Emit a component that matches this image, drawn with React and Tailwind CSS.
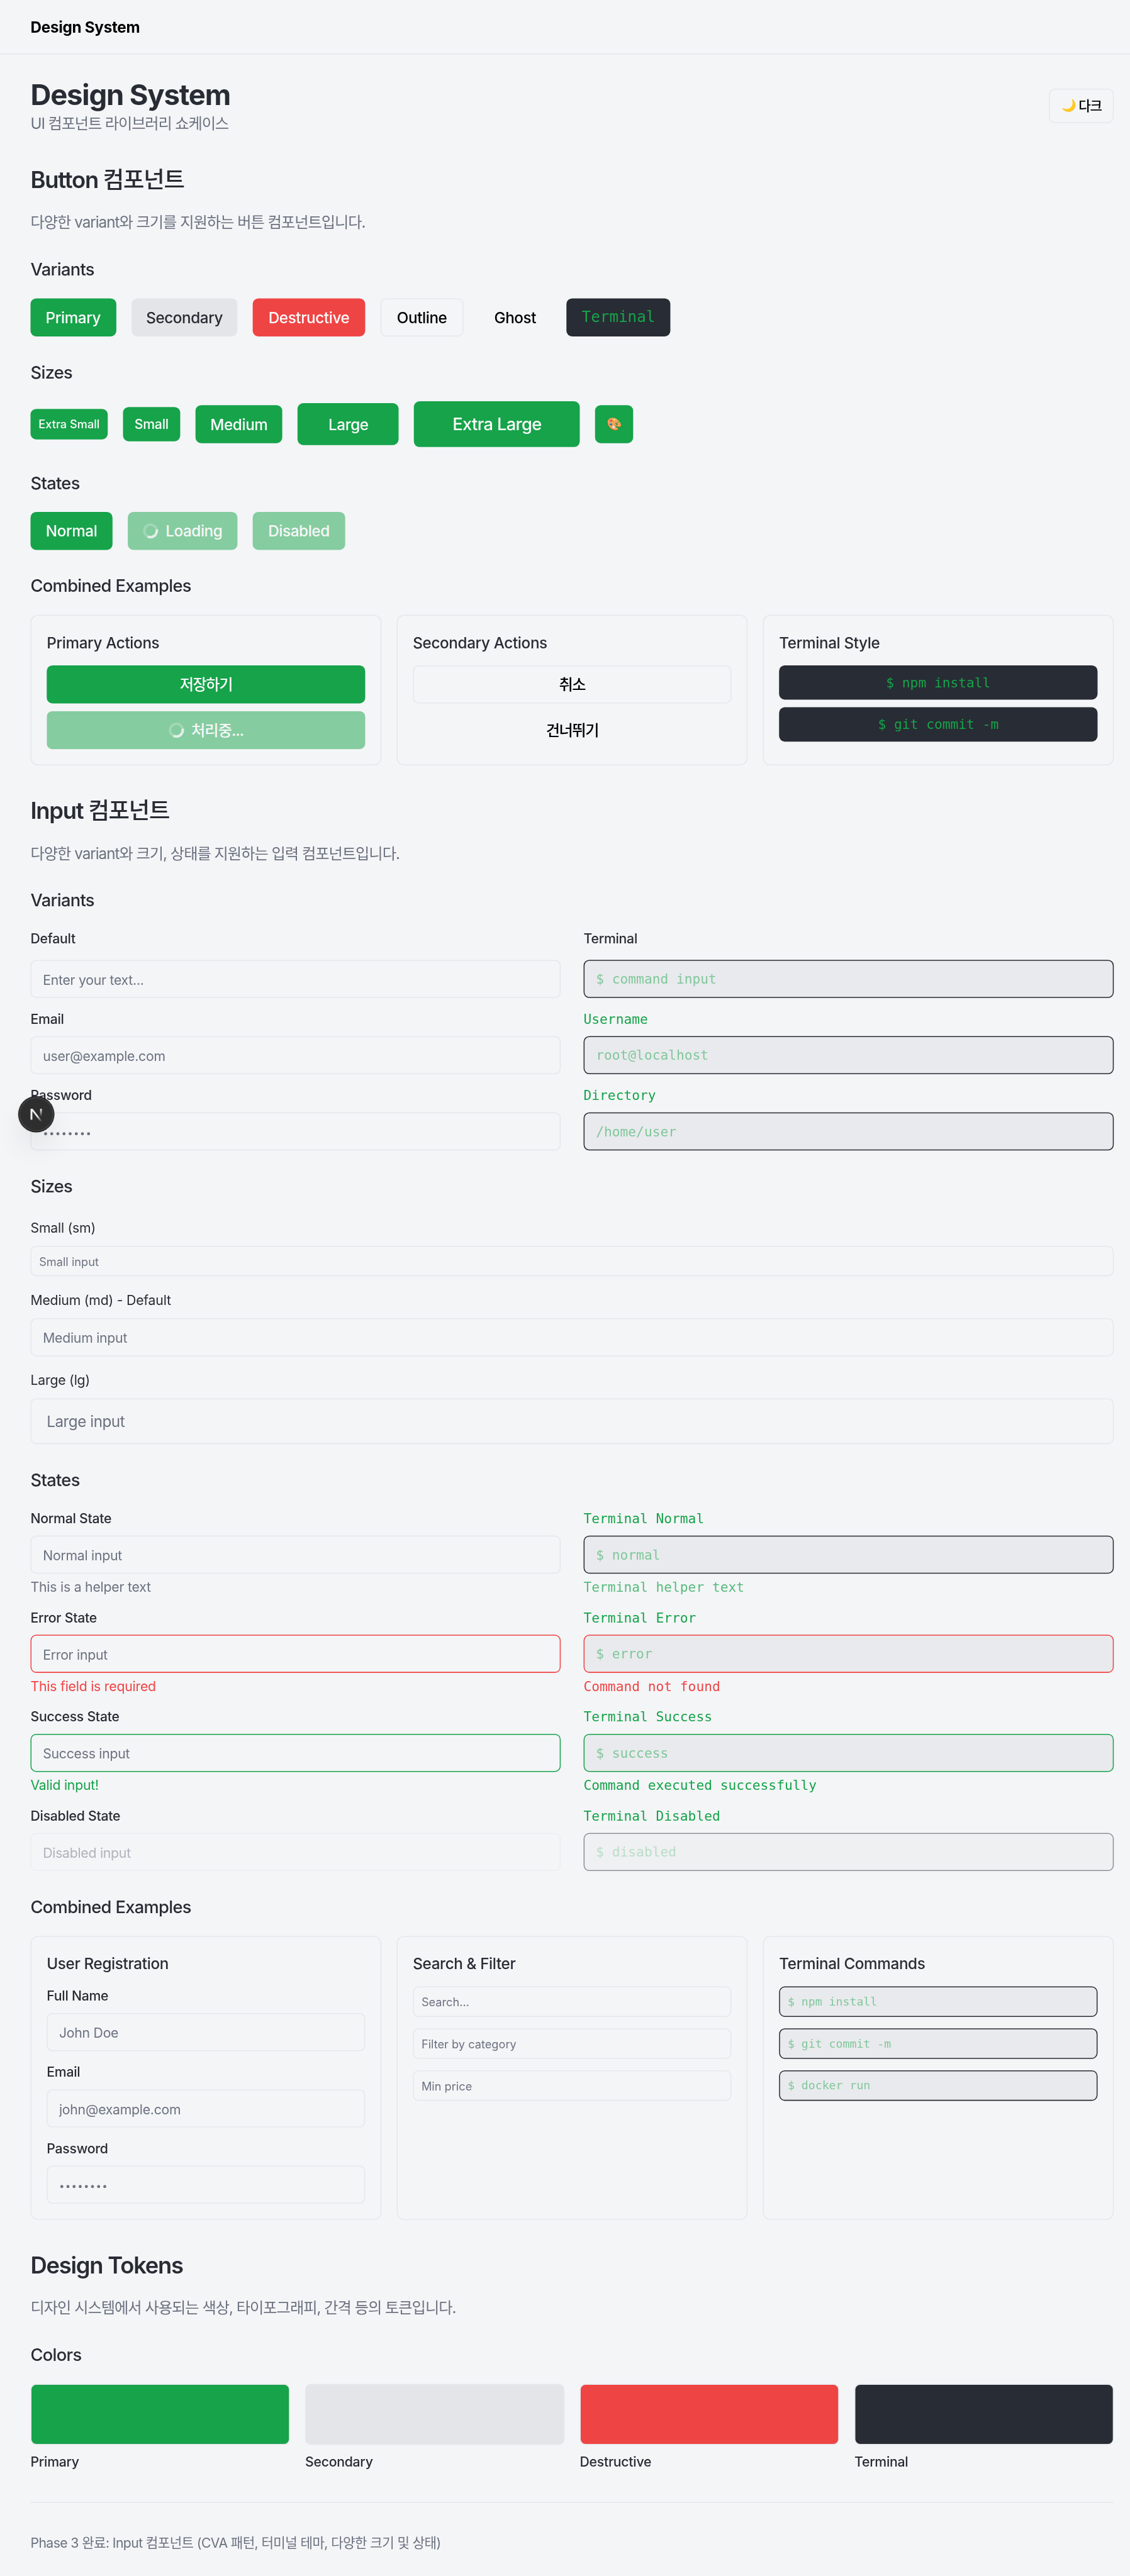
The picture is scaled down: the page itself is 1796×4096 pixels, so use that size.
import clsx from "clsx";

const MONO = "font-['DejaVu_Sans_Mono','Liberation_Mono','Noto_Sans_CJK_KR',monospace]";

const buttonVariants = {
  primary: "bg-[#16a34a] text-[#fafafa]",
  secondary: "bg-[#e4e5e8] text-[#282c34]",
  destructive: "bg-[#ef4444] text-[#fafafa]",
  outline: "border border-[#e5e7eb] text-black",
  ghost: "text-black",
  terminal: "bg-[#282c34] text-[#16a34a]",
};

const buttonSizes = {
  xs: "h-8 px-2 text-xs",
  sm: "h-9 px-3 text-sm tracking-[-0.01em]",
  md: "h-10 px-4 text-base tracking-[-0.017em]",
  lg: "h-11 px-8 text-base tracking-[-0.017em]",
  xl: "h-12 px-10 text-lg tracking-[-0.024em]",
  icon: "size-10 text-[13px]",
};

function Spinner() {
  return (
    <svg className="mr-2 size-4 -rotate-[152deg]" viewBox="0 0 24 24" fill="none">
      <circle className="opacity-25" cx="12" cy="12" r="10" stroke="currentColor" strokeWidth="4" />
      <path
        className="opacity-75"
        fill="currentColor"
        d="M4 12a8 8 0 018-8V0C5.373 0 0 5.373 0 12h4zm2 5.291A7.962 7.962 0 014 12H0c0 3.042 1.135 5.824 3 7.938l3-2.647z"
      />
    </svg>
  );
}

function Button({ variant = "primary", size = "md", loading, disabled, className, children }) {
  return (
    <button
      type="button"
      disabled={loading || disabled}
      className={clsx(
        "inline-flex shrink-0 items-center justify-center rounded-md font-medium whitespace-nowrap disabled:opacity-50",
        buttonVariants[variant],
        buttonSizes[size],
        variant === "terminal" && MONO,
        variant === "terminal" && "font-normal tracking-normal!",
        className,
      )}
    >
      {loading && <Spinner />}
      {children}
    </button>
  );
}

const inputSizes = {
  sm: "h-8 px-2 text-xs",
  md: "h-10 px-3 text-sm tracking-[-0.012em]",
  lg: "h-12 px-4 text-base tracking-[-0.02em]",
};

function Input({ terminal, size = "md", state, disabled, placeholder, type = "text", className }) {
  return (
    <input
      type={type}
      disabled={disabled}
      placeholder={placeholder}
      className={clsx(
        "block w-full rounded-md border disabled:opacity-50",
        inputSizes[size],
        terminal
          ? "bg-[#282c34]/5 tracking-normal! placeholder:text-[#16a34a]/50"
          : "bg-transparent placeholder:text-[#6b7280]",
        terminal && MONO,
        state === "error" && "border-[#ef4444]",
        state === "success" && "border-[#16a34a]",
        !state && (terminal ? "border-[#282c34]" : "border-[#e5e7eb]"),
        className,
      )}
    />
  );
}

const PASSWORD = "••••••••";
const passwordClass = "pb-[1px] placeholder:text-[10px] placeholder:tracking-[0.82px]";

function Field({ label, helper, terminal, state, ...props }) {
  return (
    <div className="flex flex-col">
      <label
        className={clsx(
          "mb-2 text-sm",
          terminal ? "font-normal text-[#16a34a]" : "font-medium tracking-[-0.012em]",
          terminal && MONO,
        )}
      >
        {label}
      </label>
      <Input terminal={terminal} state={state} {...props} />
      {helper && (
        <p
          className={clsx(
            "mt-1 text-sm",
            terminal ? MONO : "tracking-[-0.01em]",
            state === "error" && "text-[#ef4444]",
            state === "success" && "text-[#16a34a]",
            !state && (terminal ? "text-[#16a34a]/70" : "text-[#6b7280]"),
          )}
        >
          {helper}
        </p>
      )}
    </div>
  );
}

function Section({ title, description, children }) {
  return (
    <section className="flex flex-col gap-6">
      <div className="flex flex-col gap-4">
        <h2 className="text-2xl font-semibold tracking-[-0.034em]">{title}</h2>
        <p className="text-base tracking-[-0.042em] text-[#6b7280]">{description}</p>
      </div>
      {children}
    </section>
  );
}

function Group({ title, className, children }) {
  return (
    <div className="flex flex-col gap-4">
      <h3 className="text-lg leading-7 font-medium tracking-[-0.025em]">{title}</h3>
      <div className={className}>{children}</div>
    </div>
  );
}

function Card({ title, className, children }) {
  return (
    <div className="rounded-lg border border-[#e5e7eb] p-4">
      <h4 className="mb-3 text-base font-medium tracking-[-0.015em]">{title}</h4>
      <div className={clsx("flex flex-col", className)}>{children}</div>
    </div>
  );
}

const fields = [
  { label: "Normal", input: "Normal input", helper: "This is a helper text", tInput: "$ normal", tHelper: "Terminal helper text" },
  { label: "Error", state: "error", input: "Error input", helper: "This field is required", tInput: "$ error", tHelper: "Command not found" },
  { label: "Success", state: "success", input: "Success input", helper: "Valid input!", tInput: "$ success", tHelper: "Command executed successfully" },
  { label: "Disabled", disabled: true, input: "Disabled input", tInput: "$ disabled" },
];

const sizes = [
  { label: "Small (sm)", size: "sm", placeholder: "Small input" },
  { label: "Medium (md) - Default", size: "md", placeholder: "Medium input" },
  { label: "Large (lg)", size: "lg", placeholder: "Large input" },
];

const tokens = [
  ["Primary", "bg-[#16a34a]"],
  ["Secondary", "bg-[#e4e5e8]"],
  ["Destructive", "bg-[#ef4444]"],
  ["Terminal", "bg-[#282c34]"],
];

function DevBadge() {
  return (
    <div className="absolute top-[1151px] left-5 flex size-9 items-center justify-center rounded-full bg-[#2e2e2e] shadow-[0_0_0_1px_#111,inset_0_0_0_1px_#4a4a4a,0_16px_32px_-8px_rgba(0,0,0,0.24)]">
      <svg className="size-9" viewBox="0 0 216 216" fill="none">
        <defs>
          <linearGradient id="stem" x1="0" y1="74" x2="0" y2="122" gradientUnits="userSpaceOnUse">
            <stop stopColor="#fff" />
            <stop offset="1" stopColor="#fff" stopOpacity="0" />
          </linearGradient>
          <linearGradient id="slash" x1="115" y1="120" x2="142" y2="154" gradientUnits="userSpaceOnUse">
            <stop stopColor="#fff" />
            <stop offset="1" stopColor="#fff" stopOpacity="0" />
          </linearGradient>
        </defs>
        <rect x="132" y="74" width="11" height="48" fill="url(#stem)" />
        <path d="M72 142V74h13l60 78-8 6-54-70v54z" fill="url(#slash)" />
      </svg>
    </div>
  );
}

export default function App() {
  return (
    <div className="h-[4096px] w-[1796px] overflow-hidden bg-[#f4f5f7]">
      <div className="relative h-[2702.5px] w-[1185px] origin-top-left scale-[1.5156] font-['Inter','Noto_Sans_CJK_KR',sans-serif] text-[#282c34]">
        <header className="flex h-[57px] items-center border-b border-[#e5e7eb] px-8">
          <span className="text-base leading-6 font-bold tracking-[-0.012em] text-black">Design System</span>
        </header>

        <main className="flex flex-col gap-8 pt-6 pr-[17px] pl-8">
          <div className="flex items-center justify-between">
            <div>
              <h1 className="text-3xl leading-9 font-bold tracking-[-0.026em]">Design System</h1>
              <p className="text-base tracking-[-0.047em] text-[#6b7280]">UI 컴포넌트 라이브러리 쇼케이스</p>
            </div>
            <Button variant="outline" size="sm" className="w-[68px] tracking-[-0.06em]!">
              <span className="mr-[3px] text-[12.5px]">🌙</span>다크
            </Button>
          </div>

          <Section
            title={<>Button <span className="font-medium">컴포넌트</span></>}
            description="다양한 variant와 크기를 지원하는 버튼 컴포넌트입니다."
          >
            <Group title="Variants" className="flex items-center gap-4">
              <Button className="w-[89.5px]">Primary</Button>
              <Button variant="secondary" className="w-[111.8px]">Secondary</Button>
              <Button variant="destructive" className="w-[117.4px]">Destructive</Button>
              <Button variant="outline" className="w-[87.6px]">Outline</Button>
              <Button variant="ghost" className="w-[75.9px]">Ghost</Button>
              <Button variant="terminal" className="w-[108.8px]">Terminal</Button>
            </Group>
            <Group title="Sizes" className="flex items-center gap-4">
              <Button size="xs" className="w-[81px]">Extra Small</Button>
              <Button size="sm" className="w-[59.8px]">Small</Button>
              <Button className="w-[91.7px]">Medium</Button>
              <Button size="lg" className="w-[105.9px]">Large</Button>
              <Button size="xl" className="w-[173.6px]">Extra Large</Button>
              <Button size="icon">🎨</Button>
            </Group>
            <Group title="States" className="flex items-center gap-4">
              <Button className="w-[85.9px]">Normal</Button>
              <Button loading className="w-[115.3px]">Loading</Button>
              <Button disabled className="w-[96.5px]">Disabled</Button>
            </Group>
            <Group title="Combined Examples" className="grid grid-cols-3 gap-4">
              <Card title="Primary Actions" className="gap-2">
                <Button className="w-full tracking-[-0.06em]!">저장하기</Button>
                <Button loading className="w-full tracking-[-0.04em]!">처리중...</Button>
              </Card>
              <Card title="Secondary Actions" className="gap-2">
                <Button variant="outline" className="w-full tracking-[-0.06em]!">취소</Button>
                <Button variant="ghost" className="w-full tracking-[-0.06em]!">건너뛰기</Button>
              </Card>
              <Card title="Terminal Style" className="gap-2">
                <Button variant="terminal" size="sm" className="w-full">$ npm install</Button>
                <Button variant="terminal" size="sm" className="w-full">$ git commit -m</Button>
              </Card>
            </Group>
          </Section>

          <Section
            title={<>Input <span className="font-medium">컴포넌트</span></>}
            description="다양한 variant와 크기, 상태를 지원하는 입력 컴포넌트입니다."
          >
            <Group title="Variants" className="grid grid-cols-2 gap-6">
              <div className="flex flex-col gap-3">
                <h4 className="text-sm font-medium tracking-[-0.012em]">Default</h4>
                <Input placeholder="Enter your text..." />
                <Field label="Email" type="email" placeholder="user@example.com" />
                <Field label="Password" type="password" placeholder={PASSWORD} className={passwordClass} />
              </div>
              <div className="flex flex-col gap-3">
                <h4 className="text-sm font-medium tracking-[-0.012em]">Terminal</h4>
                <Input terminal placeholder="$ command input" />
                <Field terminal label="Username" placeholder="root@localhost" />
                <Field terminal label="Directory" placeholder="/home/user" />
              </div>
            </Group>
            <Group title="Sizes" className="flex flex-col gap-3">
              {sizes.map(({ label, ...props }) => (
                <div key={label} className="flex flex-col gap-2">
                  <div className="h-6 text-base">
                    <label className="text-sm tracking-[-0.01em]">{label}</label>
                  </div>
                  <Input {...props} />
                </div>
              ))}
            </Group>
            <Group title="States" className="grid grid-cols-2 gap-6">
              <div className="flex flex-col gap-3">
                {fields.map((f) => (
                  <Field key={f.label} label={`${f.label} State`} state={f.state} disabled={f.disabled} placeholder={f.input} helper={f.helper} />
                ))}
              </div>
              <div className="flex flex-col gap-3">
                {fields.map((f) => (
                  <Field key={f.label} terminal label={`Terminal ${f.label}`} state={f.state} disabled={f.disabled} placeholder={f.tInput} helper={f.tHelper} />
                ))}
              </div>
            </Group>
            <Group title="Combined Examples" className="grid grid-cols-3 gap-4">
              <Card title="User Registration" className="gap-3">
                <Field label="Full Name" placeholder="John Doe" />
                <Field label="Email" type="email" placeholder="john@example.com" />
                <Field label="Password" type="password" placeholder={PASSWORD} className={passwordClass} />
              </Card>
              <Card title="Search & Filter" className="gap-3">
                <Input size="sm" placeholder="Search..." />
                <Input size="sm" placeholder="Filter by category" />
                <Input size="sm" placeholder="Min price" />
              </Card>
              <Card title="Terminal Commands" className="gap-3">
                <Input terminal size="sm" placeholder="$ npm install" />
                <Input terminal size="sm" placeholder="$ git commit -m" />
                <Input terminal size="sm" placeholder="$ docker run" />
              </Card>
            </Group>
          </Section>

          <Section title="Design Tokens" description="디자인 시스템에서 사용되는 색상, 타이포그래피, 간격 등의 토큰입니다.">
            <Group title="Colors" className="grid grid-cols-4 gap-4">
              {tokens.map(([name, color]) => (
                <div key={name} className="flex flex-col gap-2">
                  <div className={clsx("h-16 rounded-md border border-[#e5e7eb]", color)} />
                  <p className="text-sm font-medium tracking-[-0.012em]">{name}</p>
                </div>
              ))}
            </Group>
          </Section>

          <footer className="border-t border-[#e5e7eb] pt-8">
            <p className="text-sm tracking-[-0.029em] text-[#6b7280]">
              Phase 3 완료: Input 컴포넌트 (CVA 패턴, 터미널 테마, 다양한 크기 및 상태)
            </p>
          </footer>
        </main>

        <DevBadge />
      </div>
    </div>
  );
}
